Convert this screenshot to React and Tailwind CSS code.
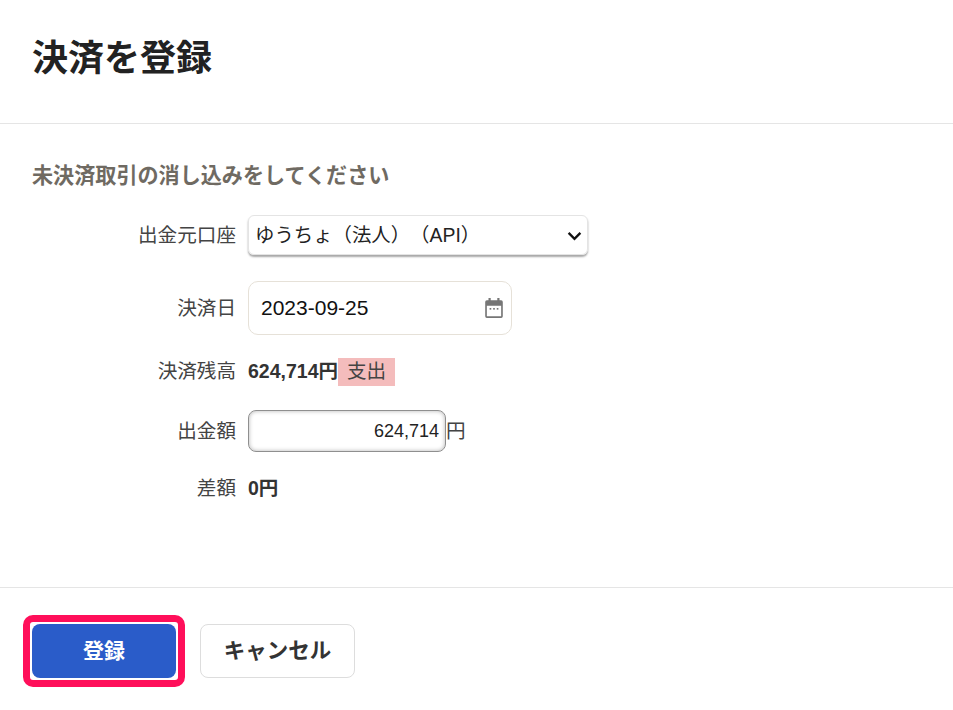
import React from 'react';

const font = "font-['Liberation_Sans','Noto_Sans_CJK_JP',sans-serif]";

function Row({ label, className, children }) {
  return (
    <div className={`flex items-center ${className}`}>
      <div className="w-[236px] shrink-0 pb-px text-right text-[19.6px] leading-[28px] text-[#444444]">{label}</div>
      <div className="ml-3 flex items-center">{children}</div>
    </div>
  );
}

function CalendarIcon() {
  return (
    <svg width="22" height="22" viewBox="0 0 20 20" fill="#767676">
      <path d="M5 1h2v2h6V1h2v2h1.500A1.500 1.500 0 0 1 18 4.500v13a1.500 1.500 0 0 1-1.500 1.500h-13A1.500 1.500 0 0 1 2 17.500v-13A1.500 1.500 0 0 1 3.500 3H5V1zM3.500 8v9.500h13V8h-13z" fillRule="evenodd" />
      <rect x="6" y="10" width="1.500" height="1.500" />
      <rect x="9.250" y="10" width="1.500" height="1.500" />
      <rect x="12.500" y="10" width="1.500" height="1.500" />
    </svg>
  );
}

export default function App() {
  return (
    <div className={`flex h-[710px] w-full flex-col bg-white ${font}`}>
      <header className="h-[124px] shrink-0 border-b border-[#e5e5e5] pl-8 pt-[34px]">
        <h1 className="text-[36px] font-bold leading-[50px] text-[#222222]">決済を登録</h1>
      </header>

      <main className="flex-1 pt-[37px]">
        <h2 className="pl-8 text-[21.1px] font-bold leading-[30px] text-[#6f6a62]">未決済取引の消し込みをしてください</h2>

        <Row label="出金元口座" className="mt-[24px]">
          <div className="flex h-[40px] w-[340px] items-center justify-between rounded-md border border-[#e4e4e4] pl-[6px] pr-[5px] text-[19.4px] text-[#222222] shadow-[0_2px_2px_rgba(0,0,0,0.35)]">
            <span className="pt-[2px] [text-spacing-trim:space-all]">ゆうちょ（法人）（API）</span>
            <svg width="15" height="15" viewBox="0 0 14 14" fill="none" stroke="#111111" strokeWidth="2.200">
              <path d="M1.500 4.500 7 10l5.500-5.500" />
            </svg>
          </div>
        </Row>

        <Row label="決済日" className="mt-[26px]">
          <div className="flex h-[54px] w-[264px] items-center justify-between rounded-[10px] border border-[#e6e1d8] pl-3 pr-[6px] text-[21px] text-[#111111]">
            <span>2023-09-25</span>
            <CalendarIcon />
          </div>
        </Row>

        <Row label="決済残高" className="mt-[22px]">
          <span className="w-[90px] text-[19.5px] font-bold text-[#333333]">624,714円</span>
          <span className="flex h-[28px] w-[57px] items-center justify-center bg-[#f4bcbc] text-[19.6px] text-[#444444]">支出</span>
        </Row>

        <Row label="出金額" className="mt-[24px]">
          <div className="flex h-[42px] w-[198px] items-center justify-end rounded-lg border border-[#8f8f8f] pr-[6px] text-[18px] text-[#222222] shadow-[inset_0_0_4px_rgba(0,0,0,0.3)]">624,714</div>
          <span className="text-[19.6px] text-[#444444]">円</span>
        </Row>

        <Row label="差額" className="mt-[22px]">
          <span className="text-[19.5px] font-bold text-[#333333]">0円</span>
        </Row>
      </main>

      <footer className="flex h-[123px] shrink-0 items-start gap-6 border-t border-[#e5e5e5] pl-8 pt-[36px]">
        <div className="relative">
          <div className="absolute -inset-[9px] rounded-[10px] border-[7px] border-[#ff0f5a]"></div>
          <button className="block h-[54px] w-[144px] rounded-lg bg-[#2a5cc9] text-[21px] font-bold text-white">登録</button>
        </div>
        <button className="h-[54px] w-[155px] rounded-lg border border-[#dddddd] bg-white text-[21.5px] font-bold text-[#333333]">キャンセル</button>
      </footer>
    </div>
  );
}
